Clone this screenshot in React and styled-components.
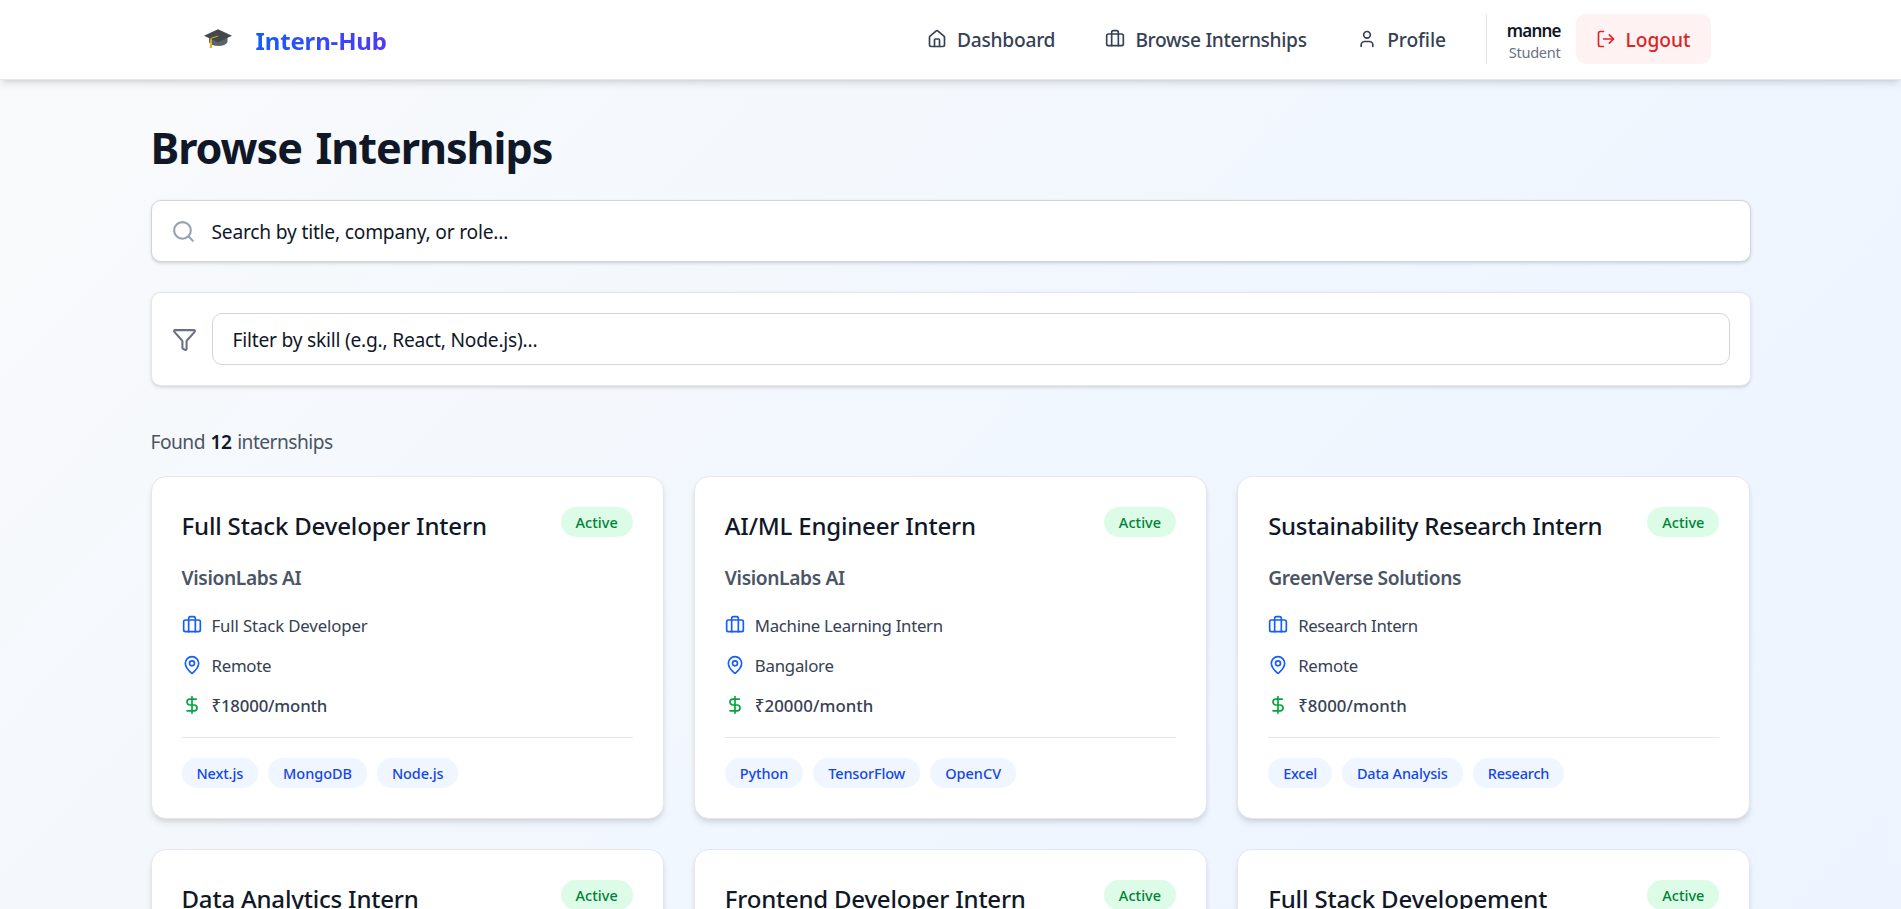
import React from 'react';
import styled, { createGlobalStyle } from 'styled-components';
import { House, Briefcase, User, LogOut, Search, Funnel, MapPin, DollarSign } from 'lucide-react';

const GlobalStyle = createGlobalStyle`
  *, *::before, *::after { box-sizing: border-box; }
  body { margin: 0; font-family: "Noto Sans", "Open Sans", sans-serif; color: #101828; }
  h1, h2, p { margin: 0; }
  svg { flex-shrink: 0; display: block; }
`;

const Page = styled.div`
  height: 909px;
  overflow: hidden;
  background: linear-gradient(to bottom right, #f9fafb, #eff6ff, #eef2ff) 0 0 / 100% 1978px no-repeat;
`;

const Nav = styled.header`
  position: relative;
  height: 80px;
  background: #fff;
  border-bottom: 1px solid #e5e7eb;
  box-shadow: 0 5px 7.5px -1.25px rgba(0, 0, 0, 0.1), 0 2.5px 5px -2.5px rgba(0, 0, 0, 0.1);
`;

const NavInner = styled.div`
  width: 1600px;
  height: 78px;
  margin: 0 auto;
  padding: 0 40px;
  display: flex;
  align-items: center;
  justify-content: space-between;
`;

const Brand = styled.div`
  display: flex;
  align-items: center;
  gap: 23.5px;
  padding-left: 13.5px;
`;

const BrandName = styled.span`
  padding-top: 2px;
  font-size: 24px;
  font-weight: 700;
  line-height: 35px;
  letter-spacing: -0.15px;
  color: transparent;
  background: linear-gradient(to right, #155dfc, #4f39f6);
  background-clip: text;
  -webkit-background-clip: text;
`;

const NavRight = styled.div`
  display: flex;
  align-items: center;
`;

const NavLinks = styled.nav`
  display: flex;
  gap: 10px;
  margin-right: 19px;
`;

const NavLink = styled.a`
  width: ${(p) => p.$width}px;
  padding: 10px 0 10px 20px;
  display: flex;
  align-items: center;
  gap: 10px;
  color: #364153;
  font-size: 19.2px;
  font-weight: 500;
  line-height: 30px;
  letter-spacing: ${(p) => p.$tracking}px;
  white-space: nowrap;
`;

const Label = styled.span`
  padding-top: 1.5px;
`;

const UserBox = styled.div`
  width: 89.5px;
  height: 50px;
  padding: 2px 15px 0 0;
  border-left: 1px solid #e5e7eb;
  display: flex;
  flex-direction: column;
  justify-content: center;
  text-align: right;
`;

const UserName = styled.span`
  font-size: 17px;
  font-weight: 600;
  line-height: 25px;
  letter-spacing: -0.85px;
`;

const UserRole = styled.span`
  font-size: 14.6px;
  line-height: 19px;
  letter-spacing: -0.3px;
  color: #6a7282;
`;

const LogoutButton = styled.button`
  width: 135px;
  height: 50px;
  padding: 0 0 0 20px;
  border: 0;
  border-radius: 10px;
  display: flex;
  align-items: center;
  gap: 10px;
  background: #fef2f2;
  color: #dc2626;
  font: 500 19.2px/30px "Noto Sans", "Open Sans", sans-serif;
  letter-spacing: 0;
`;

const Main = styled.main`
  width: 1600px;
  margin: 0 auto;
  padding-top: 40px;
`;

const Heading = styled.h1`
  height: 50px;
  padding-top: 3px;
  margin-bottom: 30px;
  font-size: 43.2px;
  font-weight: 700;
  line-height: 50px;
  letter-spacing: -1.06px;
  word-spacing: 3.5px;
`;

const SearchField = styled.div`
  height: 62px;
  margin-bottom: 30px;
  padding: 0 19px;
  display: flex;
  align-items: center;
  gap: 16px;
  background: #fff;
  border: 1px solid #d1d5dc;
  border-radius: 10px;
  box-shadow: 0 1.25px 3.75px rgba(0, 0, 0, 0.1), 0 1.25px 2.5px -1.25px rgba(0, 0, 0, 0.1);
  color: #99a1af;
`;

const Placeholder = styled.span`
  padding-top: 1.5px;
  font-size: 19.2px;
  line-height: 30px;
  letter-spacing: ${(p) => p.$tracking}px;
  color: #101828;
`;

const FilterPanel = styled.div`
  height: 94px;
  margin-bottom: 40px;
  padding: 20px;
  display: flex;
  align-items: center;
  gap: 15px;
  background: #fff;
  border: 1px solid #e5e7eb;
  border-radius: 10px;
  box-shadow: 0 1.25px 3.75px rgba(0, 0, 0, 0.1), 0 1.25px 2.5px -1.25px rgba(0, 0, 0, 0.1);
  color: #6a7282;
`;

const FilterField = styled.div`
  flex: 1;
  height: 52px;
  padding: 0 20px;
  display: flex;
  align-items: center;
  border: 1px solid #d1d5dc;
  border-radius: 10px;
`;

const ResultCount = styled.p`
  height: 30px;
  margin-bottom: 20px;
  padding-top: 1px;
  font-size: 19.2px;
  line-height: 30px;
  letter-spacing: -0.53px;
  word-spacing: 1.2px;
  color: #4a5565;

  strong {
    font-weight: 600;
    color: #101828;
  }
`;

const Grid = styled.div`
  display: grid;
  grid-template-columns: repeat(3, 1fr);
  gap: 30px;
`;

const Card = styled.article`
  height: 343px;
  padding: 30px;
  background: #fff;
  border: 1px solid #e5e7eb;
  border-radius: 15px;
  box-shadow: 0 5px 7.5px -1.25px rgba(0, 0, 0, 0.1), 0 2.5px 5px -2.5px rgba(0, 0, 0, 0.1);
`;

const CardTop = styled.div`
  height: 35px;
  margin-bottom: 20px;
  display: flex;
  align-items: flex-start;
  justify-content: space-between;
`;

const CardTitle = styled.h2`
  padding-top: 1px;
  font-size: 24px;
  font-weight: 500;
  line-height: 35px;
  letter-spacing: ${(p) => p.$tracking}px;
  white-space: nowrap;
`;

const Pill = styled.span`
  height: 30px;
  padding: 5px 15px;
  border-radius: 15px;
  font-size: 14.5px;
  font-weight: 500;
  line-height: 21px;
  letter-spacing: ${(p) => p.$tracking ?? -0.15}px;
  white-space: nowrap;
`;

const StatusBadge = styled(Pill)`
  background: #dcfce7;
  color: #008236;
`;

const SkillTag = styled(Pill)`
  background: #eff6ff;
  color: #1447e6;
`;

const Company = styled.p`
  height: 30px;
  margin-bottom: 20px;
  padding-top: 1px;
  font-size: 19.2px;
  font-weight: 600;
  line-height: 30px;
  letter-spacing: -0.37px;
  color: #4a5565;
`;

const Details = styled.div`
  display: flex;
  flex-direction: column;
  gap: 15px;
  margin-bottom: 20px;
`;

const Detail = styled.div`
  height: 25px;
  display: flex;
  align-items: center;
  gap: 10px;
  color: ${(p) => p.$icon};
`;

const DetailText = styled.span`
  padding-top: 1px;
  font-size: 16.8px;
  font-weight: ${(p) => (p.$strong ? 500 : 400)};
  line-height: 25px;
  letter-spacing: ${(p) => p.$tracking ?? -0.24}px;
  color: #364153;
`;

const Skills = styled.div`
  display: flex;
  gap: 10px;
  padding-top: 20px;
  border-top: 1px solid #e5e7eb;
`;

const GraduationCap = () => (
  <svg width="28" height="20" viewBox="0 0 28 20">
    <path d="M5 8.5h18.5V13c-1.2 2.6-4.6 3.9-9.2 3.9S6.2 15.6 5 13z" fill="#5b6268" />
    <path d="M14 0.3L28 6.7 14 13.3 0 6.7z" fill="#42484c" />
    <path d="M13.8 6.9L7 9.4V12" fill="none" stroke="#c9a227" strokeWidth="1.1" />
    <path d="M6.2 10.5h1.6l.4 8.6H5.7z" fill="#e0b030" />
  </svg>
);

const internships = [
  { title: 'Full Stack Developer Intern', tracking: -0.16, company: 'VisionLabs AI', role: 'Full Stack Developer', roleTracking: -0.13, place: 'Remote', pay: '₹18000/month', payTracking: -0.17, skills: [['Next.js'], ['MongoDB', -0.05], ['Node.js', -0.12]] },
  { title: 'AI/ML Engineer Intern', tracking: -0.19, company: 'VisionLabs AI', role: 'Machine Learning Intern', roleTracking: -0.3, place: 'Bangalore', pay: '₹20000/month', payTracking: 0.08, skills: [['Python', -0.12], ['TensorFlow', -0.15], ['OpenCV', 0]] },
  { title: 'Sustainability Research Intern', tracking: -0.3, company: 'GreenVerse Solutions', role: 'Research Intern', roleTracking: -0.36, place: 'Remote', pay: '₹8000/month', payTracking: 0.06, skills: [['Excel', -0.25], ['Data Analysis', -0.17], ['Research', -0.22]] },
  { title: 'Data Analytics Intern', tracking: -0.19 },
  { title: 'Frontend Developer Intern', tracking: -0.22 },
  { title: 'Full Stack Developement', tracking: -0.14 },
];

const InternshipCard = ({ title, tracking, company, role, roleTracking, place, pay, payTracking, skills }) => (
  <Card>
    <CardTop>
      <CardTitle $tracking={tracking}>{title}</CardTitle>
      <StatusBadge $tracking={0.04}>Active</StatusBadge>
    </CardTop>
    {company && (
      <>
        <Company>{company}</Company>
        <Details>
          <Detail $icon="#155dfc"><Briefcase size={20} /><DetailText $tracking={roleTracking}>{role}</DetailText></Detail>
          <Detail $icon="#155dfc"><MapPin size={20} /><DetailText>{place}</DetailText></Detail>
          <Detail $icon="#00a63e"><DollarSign size={20} /><DetailText $strong $tracking={payTracking}>{pay}</DetailText></Detail>
        </Details>
        <Skills>
          {skills.map(([name, t]) => <SkillTag key={name} $tracking={t}>{name}</SkillTag>)}
        </Skills>
      </>
    )}
  </Card>
);

export default function App() {
  return (
    <Page>
      <GlobalStyle />
      <Nav>
        <NavInner>
          <Brand>
            <GraduationCap />
            <BrandName>Intern-Hub</BrandName>
          </Brand>
          <NavRight>
            <NavLinks>
              <NavLink $width={168.4} $tracking={-0.26}><House size={20} /><Label>Dashboard</Label></NavLink>
              <NavLink $width={241.8} $tracking={-0.35}><Briefcase size={20} /><Label>Browse Internships</Label></NavLink>
              <NavLink $width={129.8} $tracking={-0.1}><User size={20} /><Label>Profile</Label></NavLink>
            </NavLinks>
            <UserBox>
              <UserName>manne</UserName>
              <UserRole>Student</UserRole>
            </UserBox>
            <LogoutButton><LogOut size={20} /><Label>Logout</Label></LogoutButton>
          </NavRight>
        </NavInner>
      </Nav>
      <Main>
        <Heading>Browse Internships</Heading>
        <SearchField>
          <Search size={25} />
          <Placeholder $tracking={-0.2}>Search by title, company, or role...</Placeholder>
        </SearchField>
        <FilterPanel>
          <Funnel size={25} />
          <FilterField><Placeholder $tracking={-0.22}>Filter by skill (e.g., React, Node.js)...</Placeholder></FilterField>
        </FilterPanel>
        <ResultCount>Found <strong>12</strong> internships</ResultCount>
        <Grid>
          {internships.map((item) => <InternshipCard key={item.title} {...item} />)}
        </Grid>
      </Main>
    </Page>
  );
}
